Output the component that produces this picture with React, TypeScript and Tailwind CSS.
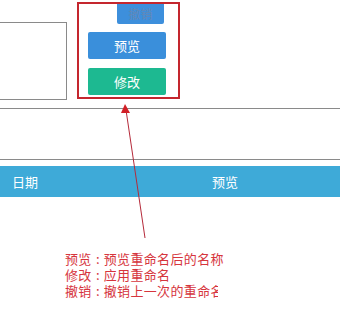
import React from "react";

export default function App() {
  const font = { fontFamily: '"Noto Sans CJK SC", "Noto Sans", sans-serif' };
  return (
    <div className="relative w-[340px] h-[324px] bg-white overflow-hidden" style={font}>
      {/* top section */}
      <div className="flex h-[100px]">
        <div className="mt-[22px] w-[67px] h-[78px] border-t border-r border-b border-[#8a8a8a]"></div>
        <div className="ml-[10px] mt-[2px] w-[103px] h-[97px] border-2 border-[#c4262e] flex flex-col">
          <div className="ml-[38px] w-[47px] h-[20px] bg-[#3d8fdc] rounded-b-[2px] flex items-center justify-center text-[12px] text-[#6388b6] leading-none">
            撤销
          </div>
          <div className="ml-[9px] mt-[8px] w-[78px] h-[27px] bg-[#3a8fdb] rounded-[2px] flex items-center justify-center text-[13px] text-white leading-none">
            预览
          </div>
          <div className="ml-[9px] mt-[9px] w-[78px] h-[27px] bg-[#1db991] rounded-[2px] flex items-center justify-center text-[13px] text-white leading-none">
            修改
          </div>
        </div>
      </div>
      <div className="mt-[8px] h-px bg-[#8a8a8a]"></div>
      <div className="mt-[50px] h-px bg-[#8a8a8a]"></div>
      <div className="mt-[6px] h-[31px] bg-[#3eaad8] flex items-center text-white text-[13px]">
        <span className="ml-[12px]">日期</span>
        <span className="ml-[174px]">预览</span>
      </div>
      <div className="mt-[54px] ml-[65px] text-[13px] leading-[16px] tracking-[0.35px] text-[#d6353d] whitespace-nowrap">
        <div className="flex">
          <span>预览</span>
          <span className="w-[12px] text-center tracking-normal">:</span>
          <span>预览重命名后的名称</span>
        </div>
        <div className="flex">
          <span>修改</span>
          <span className="w-[12px] text-center tracking-normal">:</span>
          <span>应用重命名</span>
        </div>
        <div className="flex w-[153px] overflow-hidden">
          <span>撤销</span>
          <span className="w-[12px] shrink-0 text-center tracking-normal">:</span>
          <span>撤销上一次的重命名</span>
        </div>
      </div>
      <svg className="absolute left-0 top-0" width="340" height="324" viewBox="0 0 340 324">
        <line x1="126" y1="110" x2="145" y2="238" stroke="#b52a3a" strokeWidth="1" />
        <polygon points="125,104 121,113 130,113" fill="#d11f26" />
      </svg>
    </div>
  );
}
